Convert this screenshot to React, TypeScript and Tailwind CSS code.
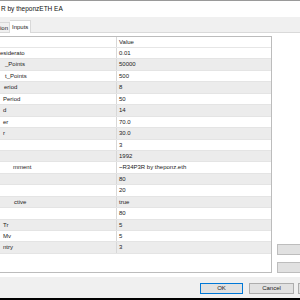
import React from 'react';

interface InputRow {
  name: string;
  indent: number;
  value: string;
}

const rows: InputRow[] = [
  { name: 'esiderato', indent: 0, value: '0.01' },
  { name: '_Points', indent: 5, value: '50000' },
  { name: 't_Points', indent: 5, value: '500' },
  { name: 'eriod', indent: 4, value: '8' },
  { name: 'Period', indent: 3, value: '50' },
  { name: 'd', indent: 3, value: '14' },
  { name: 'er', indent: 3, value: '70.0' },
  { name: 'r', indent: 3, value: '30.0' },
  { name: '', indent: 3, value: '3' },
  { name: '', indent: 3, value: '1992' },
  { name: 'mment', indent: 13, value: '~R34P3R by theponz.eth' },
  { name: '', indent: 3, value: '80' },
  { name: '', indent: 3, value: '20' },
  { name: 'ctive', indent: 14, value: 'true' },
  { name: '', indent: 3, value: '80' },
  { name: 'Tr', indent: 3, value: '5' },
  { name: 'Mv', indent: 3, value: '5' },
  { name: 'ntry', indent: 3, value: '3' },
];

const App: React.FC = () => {
  return (
    <div
      className="w-[300px] h-[300px] overflow-hidden flex flex-col bg-white text-[#222]"
      style={{ fontFamily: '"Liberation Sans", Arial, sans-serif' }}
    >
      <div className="h-px bg-[#9a9a9a]"></div>

      {/* title */}
      <div className="h-[16px] flex items-center pl-[1px] text-[6.5px] text-[#111]">
        R by theponzETH EA
      </div>

      {/* tabs */}
      <div className="h-[16px] bg-[#f0f0f0] flex items-end">
        <div className="w-[10px] h-[11px] border-t border-r border-b border-[#d9d9d9] text-[6px] leading-[10px] overflow-hidden whitespace-nowrap">
          ion
        </div>
        <div className="w-[21px] h-[13px] bg-white border-t border-r border-[#d9d9d9] text-[6px] leading-[12px] pl-[2px] whitespace-nowrap">
          Inputs
        </div>
        <div className="flex-1 border-b border-[#d9d9d9]"></div>
      </div>

      {/* content */}
      <div className="flex-1 flex gap-[5px] pt-[3px] pb-[4px] bg-white">
        <div className="w-[272px] shrink-0 flex flex-col border-t border-r border-b border-[#bcbcbc] text-[6px]">
          <div className="h-[11px] flex border-b border-[#e6e6e6] shrink-0">
            <div className="w-[117px] border-r border-[#d8d8d8]"></div>
            <div className="flex-1 pl-[2px] leading-[10px]">Value</div>
          </div>
          {rows.map((row, i) => (
            <div
              key={i}
              className={`h-[11.45px] shrink-0 flex border-b border-[#e4e4e4] ${i % 2 === 1 ? 'bg-[#ececec]' : 'bg-white'}`}
            >
              <div
                className="w-[117px] border-r border-[#d8d8d8] whitespace-nowrap overflow-hidden leading-[10.5px]"
                style={{ paddingLeft: row.indent }}
              >
                {row.name}
              </div>
              <div className="flex-1 pl-[2px] whitespace-nowrap leading-[10.5px]">{row.value}</div>
            </div>
          ))}
        </div>
        <div className="flex-1 flex flex-col justify-end gap-[7px]">
          <div className="h-[11px] w-[30px] bg-[#e1e1e1] border border-[#bdbdbd]"></div>
          <div className="h-[11px] w-[30px] bg-[#e1e1e1] border border-[#bdbdbd]"></div>
        </div>
      </div>

      {/* bottom buttons */}
      <div className="h-[21px] bg-[#f0f0f0] flex items-start pt-[6px] pl-[200px] gap-[6px] text-[6px]">
        <div className="w-[43px] h-[11px] shrink-0 bg-[#e1e1e1] border border-[#0078d7] flex items-center justify-center">
          OK
        </div>
        <div className="w-[45px] h-[11px] shrink-0 bg-[#e1e1e1] border border-[#adadad] flex items-center justify-center">
          Cancel
        </div>
        <div className="w-[45px] h-[11px] shrink-0 -ml-[2px] bg-[#e1e1e1] border border-[#adadad]"></div>
      </div>

      <div className="h-[2px] bg-black"></div>
    </div>
  );
};

export default App;
